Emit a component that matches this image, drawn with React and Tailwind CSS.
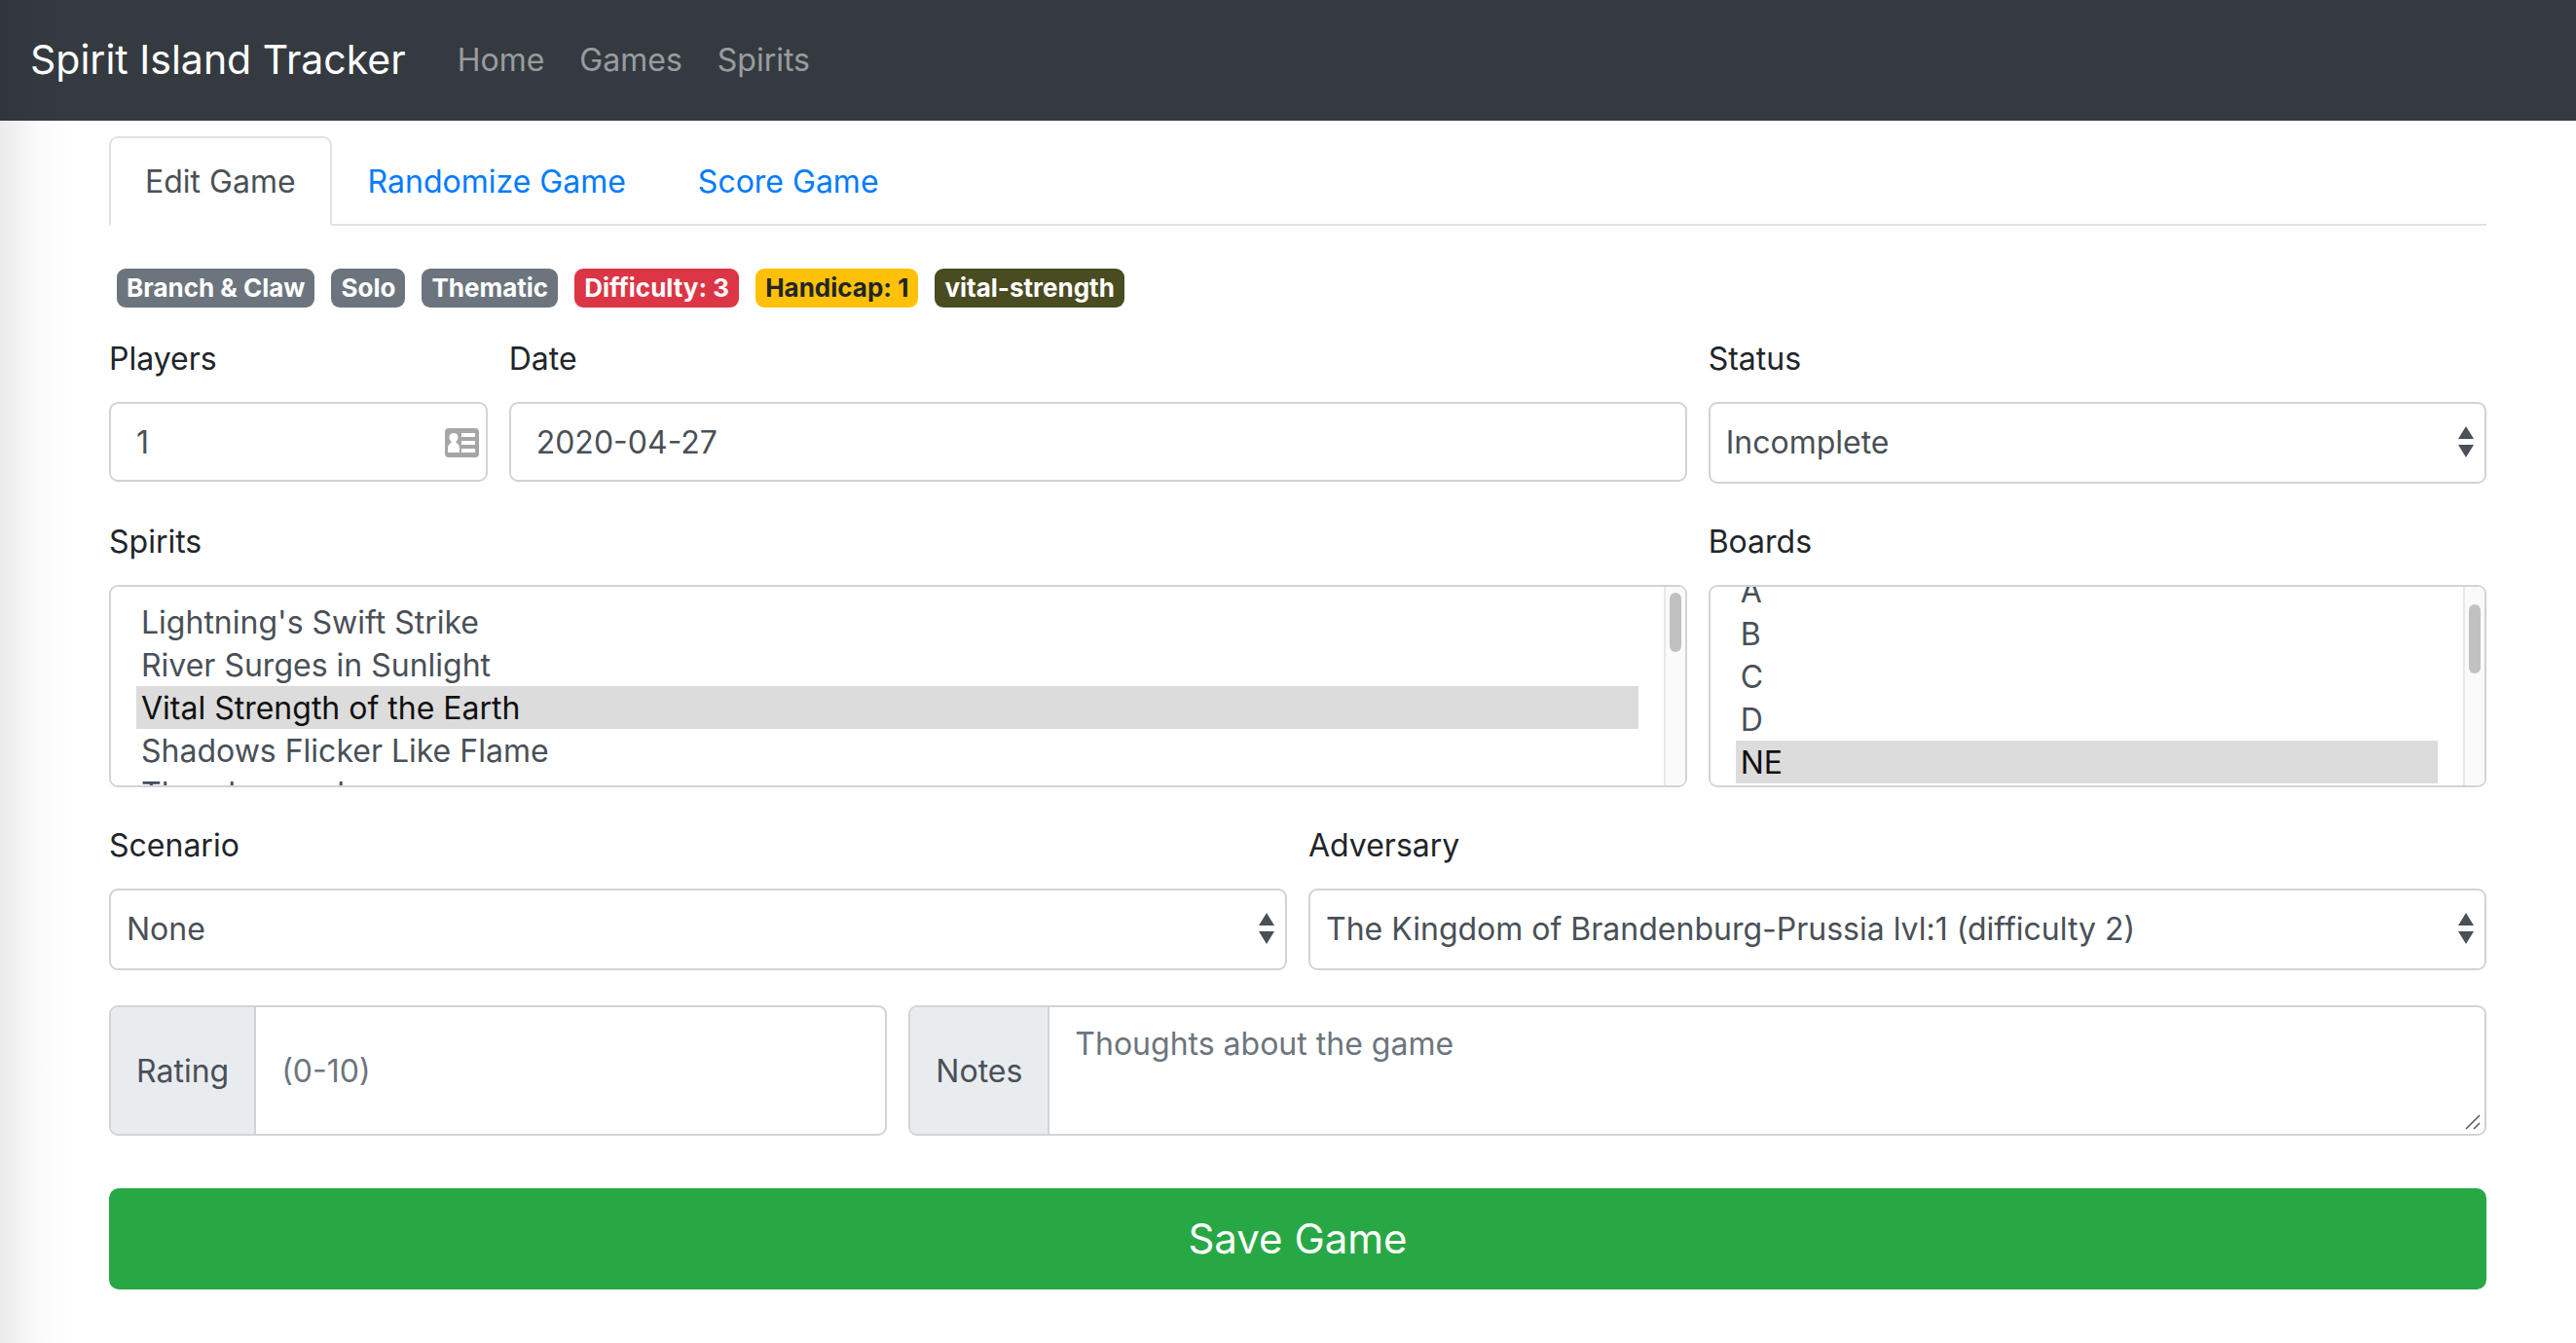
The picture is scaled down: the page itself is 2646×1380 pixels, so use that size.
import React, { useEffect, useRef, useState } from "react";

const SPIRITS = [
  "Lightning's Swift Strike",
  "River Surges in Sunlight",
  "Vital Strength of the Earth",
  "Shadows Flicker Like Flame",
  "Thunderspeaker",
  "A Spread of Rampant Green",
  "Ocean's Hungry Grasp",
  "Bringer of Dreams and Nightmares",
  "Keeper of the Forbidden Wilds",
  "Sharp Fangs Behind the Leaves",
  "Serpent Slumbering Beneath the Island",
  "Heart of the Wildfire",
  "Volcano Looming High",
  "Lure of the Deep Wilderness",
];

const BOARDS = ["A", "B", "C", "D", "NE", "E", "NW", "F", "SE", "SW", "E1", "W1"];

const BADGES = [
  { text: "Branch & Claw", tone: "bg-[#6c757d] text-white" },
  { text: "Solo", tone: "bg-[#6c757d] text-white" },
  { text: "Thematic", tone: "bg-[#6c757d] text-white" },
  { text: "Difficulty: 3", tone: "bg-[#dc3545] text-white" },
  { text: "Handicap: 1", tone: "bg-[#ffc107] text-[#212529]" },
  { text: "vital-strength", tone: "bg-[#494b21] text-white" },
];

const BOX = "w-full rounded-[9px] border-2 border-[#ced4da] bg-white text-[#495057]";

function Field({ id, label, span, children }) {
  return (
    <div className={span}>
      <label htmlFor={id} className="mb-[18px] block w-fit leading-[53px]">
        {label}
      </label>
      {children}
    </div>
  );
}

function Dropdown({ id, options }) {
  return (
    <div className="relative">
      <select id={id} className={`${BOX} block h-[84px] appearance-none pr-12 pb-0.5 pl-4`}>
        {options.map((o) => (
          <option key={o}>{o}</option>
        ))}
      </select>
      <svg
        viewBox="0 0 16 32"
        className="pointer-events-none absolute top-[25px] right-[13px] h-8 w-4 fill-[#495057]"
        aria-hidden="true"
      >
        <path d="M8 0 16 13H0ZM0 19h16L8 32Z" />
      </svg>
    </div>
  );
}

function ListBox({ id, options, selected, scroll }) {
  const ref = useRef(null);
  const [thumb, setThumb] = useState({ top: 6, height: 64 });

  const track = () => {
    const el = ref.current;
    if (!el) return;
    const ratio = el.clientHeight / el.scrollHeight;
    setThumb({ top: 6 + el.scrollTop * ratio, height: el.clientHeight * ratio - 4 });
  };

  useEffect(() => {
    const place = () => {
      if (ref.current) ref.current.scrollTop = scroll;
      track();
    };
    place();
    const frame = requestAnimationFrame(() => requestAnimationFrame(place));
    return () => cancelAnimationFrame(frame);
  }, [scroll]);

  return (
    <div className="relative">
      <select
        id={id}
        ref={ref}
        multiple
        defaultValue={[selected]}
        onScroll={track}
        className={`${BOX} block h-[208px] overflow-y-scroll py-[14px] pr-12 pl-[26px] [scrollbar-width:none]`}
      >
        {options.map((o) => (
          <option
            key={o}
            className="h-11 px-[5px] pt-[3px] pb-0 checked:bg-linear-to-r checked:from-[#dcdcdc] checked:to-[#dcdcdc]"
          >
            {o}
          </option>
        ))}
      </select>
      <div className="pointer-events-none absolute inset-y-0.5 right-0.5 w-[22px] rounded-r-[7px] border-l-2 border-[#e8e8e8] bg-[#fafafa]">
        <div
          className="relative ml-1 w-3 rounded-full bg-[#c1c1c1]"
          style={{ top: thumb.top, height: thumb.height }}
        />
      </div>
    </div>
  );
}

function ContactCardIcon() {
  return (
    <svg
      viewBox="0 0 35 30"
      className="pointer-events-none absolute top-[27px] right-[9px] h-[30px] w-[35px]"
      aria-hidden="true"
    >
      <rect width="35" height="30" rx="4" fill="#a6a6a6" />
      <g fill="#fff">
        <circle cx="9" cy="9.5" r="4.5" />
        <path d="M6.5 12h5v3c2.500 1 3.500 3 3.500 6v4H3v-4c0-3 1-5 3.500-6Z" />
        <path d="M17 5h14v4H17zM17 13h14v4H17zM17 21h14v4H17z" />
      </g>
    </svg>
  );
}

export default function App() {
  return (
    <div className="relative min-h-screen bg-white font-['Inter',sans-serif] text-[32px] leading-[53px] text-[#212529]">
      <nav className="flex h-[124px] items-center bg-[#343a40] px-[31px] pb-0.5">
        <a href="#" className="mr-[53px] text-[41px] text-white">
          Spirit Island Tracker
        </a>
        <div className="flex gap-9 text-white/50">
          <a href="#home">Home</a>
          <a href="#games">Games</a>
          <a href="#spirits">Spirits</a>
        </div>
      </nav>

      <main className="pt-4 pr-[92px] pl-28">
        <div className="flex border-b-2 border-[#dee2e6]">
          <a
            href="#edit"
            className="-mb-0.5 rounded-t-[9px] border-2 border-[#dee2e6] border-b-white bg-white px-[35px] pt-[18px] pb-[17px] text-[#495057]"
          >
            Edit Game
          </a>
          <a href="#randomize" className="px-[37px] pt-5 text-[#007bff]">
            Randomize Game
          </a>
          <a href="#score" className="px-[37px] pt-5 text-[#007bff]">
            Score Game
          </a>
        </div>

        <div className="mt-11 flex gap-[17px] pl-2">
          {BADGES.map((b) => (
            <span
              key={b.text}
              className={`${b.tone} rounded-[9px] px-2.5 text-[26px] leading-10 font-bold`}
            >
              {b.text}
            </span>
          ))}
        </div>

        <form className="mt-[26px]" onSubmit={(e) => e.preventDefault()}>
          <div className="grid grid-cols-12 gap-x-[22px] gap-y-[33px]">
            <Field id="players" label="Players" span="col-span-2">
              <div className="relative">
                <input
                  id="players"
                  type="text"
                  inputMode="numeric"
                  defaultValue="1"
                  className={`${BOX} block h-[82px] pr-12 pl-[26px]`}
                />
                <ContactCardIcon />
              </div>
            </Field>
            <Field id="date" label="Date" span="col-span-6">
              <input
                id="date"
                type="text"
                defaultValue="2020-04-27"
                className={`${BOX} block h-[82px] px-[26px]`}
              />
            </Field>
            <Field id="status" label="Status" span="col-span-4">
              <Dropdown id="status" options={["Incomplete", "Victory", "Defeat"]} />
            </Field>

            <Field id="spirit-list" label="Spirits" span="col-span-8">
              <ListBox
                id="spirit-list"
                options={SPIRITS}
                selected="Vital Strength of the Earth"
                scroll={0}
              />
            </Field>
            <Field id="boards" label="Boards" span="col-span-4">
              <ListBox id="boards" options={BOARDS} selected="NE" scroll={32} />
            </Field>

            <Field id="scenario" label="Scenario" span="col-span-6">
              <Dropdown id="scenario" options={["None", "Blitz"]} />
            </Field>
            <Field id="adversary" label="Adversary" span="col-span-6">
              <Dropdown
                id="adversary"
                options={["The Kingdom of Brandenburg-Prussia lvl:1 (difficulty 2)", "None"]}
              />
            </Field>
          </div>

          <div className="mt-9 grid h-[134px] grid-cols-12 gap-x-[22px]">
            <div className="col-span-4 flex overflow-hidden rounded-[9px] border-2 border-[#ced4da]">
              <label
                htmlFor="rating"
                className="flex items-center border-r-2 border-[#ced4da] bg-[#e9ecef] px-[26px] text-[#495057]"
              >
                Rating
              </label>
              <input
                id="rating"
                type="text"
                placeholder="(0-10)"
                className="min-w-0 flex-1 px-[26px] text-[#495057] placeholder:text-[#6c757d]"
              />
            </div>
            <div className="relative col-span-8 flex overflow-hidden rounded-[9px] border-2 border-[#ced4da]">
              <label
                htmlFor="notes"
                className="flex items-center border-r-2 border-[#ced4da] bg-[#e9ecef] px-[26px] text-[#495057]"
              >
                Notes
              </label>
              <textarea
                id="notes"
                placeholder="Thoughts about the game"
                className="min-w-0 flex-1 resize-none px-[26px] py-[11px] text-[#495057] placeholder:text-[#6c757d]"
              />
              <svg
                viewBox="0 0 16 16"
                className="pointer-events-none absolute right-1 bottom-1 size-4 stroke-[#555]"
                strokeWidth="1.500"
                aria-hidden="true"
              >
                <path d="M1 15 15 1M9 15l6-6" />
              </svg>
            </div>
          </div>

          <button
            type="submit"
            className="mt-[54px] block h-[104px] w-full rounded-[10px] bg-[#28a745] pb-0.5 text-[42px] text-white"
          >
            Save Game
          </button>
        </form>
      </main>

      {/* Soft shade along the left edge of the window */}
      <div className="pointer-events-none absolute inset-y-0 left-0 w-20 bg-linear-to-r from-black/8 via-black/2 to-transparent" />
    </div>
  );
}
